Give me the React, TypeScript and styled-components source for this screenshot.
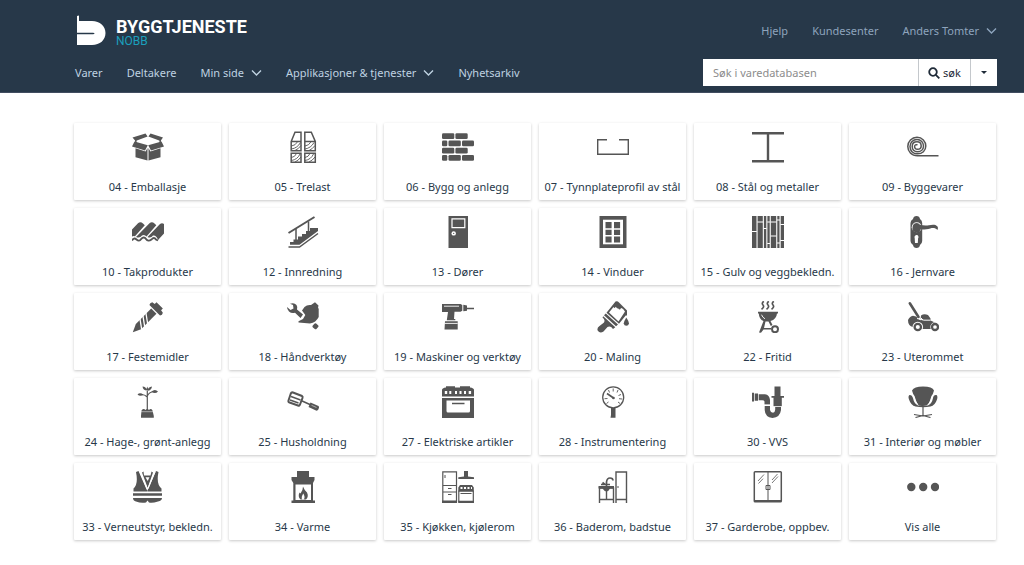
import React from "react";
import styled, { createGlobalStyle } from "styled-components";

const GlobalStyle = createGlobalStyle`
  *, *::before, *::after { box-sizing: border-box; }
  body {
    margin: 0;
    background: #fff;
    color: #273849;
    font: 11px/16px "Noto Sans", "Open Sans", sans-serif;
  }
  a { color: inherit; text-decoration: none; }
  button, input { font: inherit; }
`;

const Header = styled.header`
  display: flex;
  flex-direction: column;
  gap: 12px;
  padding: 14px 27px 6px 75px;
  background: #273849;
  border-bottom: 1px solid #414d60;
`;

const Bar = styled.div`
  display: flex;
  align-items: center;
  justify-content: space-between;
`;

const Logo = styled.a`
  display: flex;
  align-items: center;
  gap: 10px;
  padding-left: 2px;
  color: #fff;
  font-family: Roboto, "Noto Sans", sans-serif;
`;

const LogoText = styled.span`
  display: flex;
  flex-direction: column;
  padding-top: 5px;
`;

const Brand = styled.span`
  font-size: 18px;
  font-weight: 700;
  line-height: 16px;
`;

const Product = styled.span`
  color: #1b9fbc;
  font-size: 12px;
  line-height: 12px;
`;

const Nav = styled.nav`
  display: flex;
  gap: 24px;
`;

const NavLink = styled.a<{ $muted?: boolean }>`
  display: flex;
  align-items: center;
  gap: 7px;
  color: ${(p) => (p.$muted ? "#8ea4bd" : "#bfd2e1")};
  white-space: nowrap;
`;

const Search = styled.form`
  display: flex;
  width: 294px;
  height: 27px;
`;

const SearchInput = styled.input`
  flex: 1;
  min-width: 0;
  padding: 0 10px;
  border: 0;
  background: #fff;
  color: #273849;
  &::placeholder { color: #8c8c8c; opacity: 1; }
`;

const SearchButton = styled.button<{ $width: number }>`
  display: flex;
  align-items: center;
  justify-content: center;
  gap: 3px;
  width: ${(p) => p.$width}px;
  padding: 0;
  border: 0;
  border-left: 1px solid #c4c8cc;
  background: #fff;
  color: #1f2b38;
`;

const Grid = styled.main`
  display: grid;
  grid-template-columns: repeat(6, minmax(0, 1fr));
  gap: 8px;
  padding: 30px 28px 26px 74px;
`;

const Card = styled.a`
  display: flex;
  flex-direction: column;
  align-items: center;
  gap: 16px;
  padding: 8px 0 5px;
  border-radius: 1px;
  background: #fff;
  box-shadow: 0 1px 3px rgba(0, 0, 0, 0.22);
  white-space: nowrap;
`;

const Icon = styled.svg`
  width: 32px;
  height: 32px;
  fill: #555;
  stroke: none;
  .l { fill: none; stroke: #555; }
  .w { fill: #fff; }
  .wl { fill: none; stroke: #fff; }
`;

const Chevron = () => (
  <svg width="11" height="8" viewBox="0 0 11 8" fill="none" stroke="currentColor" strokeWidth="1.4" aria-hidden="true">
    <path d="M1 1.5 5.5 6 10 1.5" />
  </svg>
);

const icons = {
  box: (
    <>
      <path d="M.5 6.500 13.500 2.500 15.600 5.500 3.500 10ZM31 6.500 18.500 2.500 16.400 5.500 28.500 10ZM2.500 10.500 15.800 14.300 13 19.500 0 15.600ZM29.500 10.500 16.200 14.300 19 19.500 32 15.600Z" />
      <path d="M3.500 17.300 13.600 20.400 15.500 17V29.600L3.500 26.300ZM28.500 17.300 18.400 20.400 16.500 17V29.600L28.500 26.300Z" />
      <path className="l" strokeWidth="1.500" d="M3.800 9V12M28.200 9V12" />
    </>
  ),
  timber: (
    <g className="l" strokeWidth="1.500">
      <path d="M4.200 10.500 8 1.200h6v18.600H4.200ZM4.200 10.500H14M4.200 22.200H14v9H4.200Z" />
      <path d="M17.800 1.200h6.500l4 9.300v9.300H17.800ZM17.800 10.500h10.500M17.800 22.200h10.500v9H17.800Z" />
      <path strokeWidth=".9" d="M4.500 15q4-.5 6-4.200M4.500 18q6-1 9-6.500M8 19.500q3.500-1.500 6-5M4.500 26.500q3.500-.5 5-4M4.500 29.500q6-1 8.500-6.500M8 31q3.500-1.500 6-5" />
      <path strokeWidth=".9" d="M18 15q4-.5 6-4.200M18 18q6-1 9-6.500M22 19.500q3.500-1.500 6-5M18 26.500q3.500-.5 5-4M18 29.500q6-1 8.500-6.500M22 31q3.500-1.500 6-5" />
    </g>
  ),
  bricks: (
    <>
      {[2.3, 16.7].map((y) => (
        <g key={y}>
          <rect x="0" y={y} width="12.300" height="5.800" rx="1.300" />
          <rect x="13.400" y={y} width="12.300" height="5.800" rx="1.300" />
          <rect x="0" y={y + 7.2} width="5.300" height="5.800" rx="1.300" />
          <rect x="6.500" y={y + 7.2} width="12.300" height="5.800" rx="1.300" />
          <rect x="20" y={y + 7.2} width="12" height="5.800" rx="1.300" />
        </g>
      ))}
    </>
  ),
  profile: <path className="l" strokeWidth="1.400" d="M10 8.700H.7V23.300H31.300V8.700H22" />,
  beam: <path d="M0 1h32v2.600H17.200V29H32v2.600H0V29H14.800V3.600H0Z" />,
  roll: (
    <path
      className="l"
      strokeWidth="1.500"
      d="M31.500 24.800H10.500C4.500 24.800.8 20.500.8 15.500S4.800 6.300 10 6.300s8.800 4 8.800 8.800-3.600 7.700-8.300 7.700-7.500-3.300-7.500-7.300 3-7 7-7 6.500 3 6.500 6.500-2.700 5.700-6 5.700-5.300-2.200-5.300-5.200 2-4.700 4.800-4.700 4.200 2 4.200 4.200-1.700 3.300-3.700 3.300-2.900-1.300-2.900-2.800 1.400-2.100 2.900-1.700"
    />
  ),
  roof: (
    <>
      <path d="M0 13.500 6 7.200Q8.500 5.300 11 7.500L12.800 9.200 3 20.300Q1.500 19.500 0 20.500ZM4 21 17.500 7.200Q20 5.300 22.500 7.500L24.300 9.200 14.500 20.500Q12.500 18 10 19.500 8 22.500 4 21ZM15.500 21 28 8Q30 6.500 32 8V17.500L26 24Q24.500 19 21 19.500 19 22.500 15.500 21Z" />
      <path className="l" strokeWidth="1.900" d="M0 24.500Q1.800 21.200 4.500 23.500T9 23.200Q12 20 14 23T19.500 23.500Q22 20.500 24 23.500L26 24.500" />
    </>
  ),
  stairs: (
    <>
      <path className="l" strokeWidth="2" d="M1.500 17 27.500 1" />
      <path className="l" strokeWidth="1.500" d="M9 13V25M21.500 5.500V16" />
      <path d="M3 28.800V26H6.500V23.500H11V20.500H15V18H19V15H23V12H31V15L12.500 28.800Z" />
      <path className="l" strokeWidth="1.500" d="M1.500 31H12.500L31 17.500" />
    </>
  ),
  door: (
    <>
      <path d="M6.500 0H26V32H6.500Z" />
      <path className="wl" strokeWidth="1.200" d="M10 2.800H22.800V11.700H10Z" />
      <circle className="w" cx="11.700" cy="17.400" r="2.200" />
      <circle cx="11.700" cy="17.400" r=".6" />
    </>
  ),
  window: (
    <>
      <path d="M2.500 0H29.500V32H2.500Z" />
      <path className="w" d="M6 3.700H26V28.300H6Z" />
      <path d="M8.500 6H14.600V12.200H8.500ZM17 6h6.100v6.200H17ZM8.500 13.800h6.100V19H8.500ZM17 13.800h6.100V19H17ZM8.500 20.600h6.100v6H8.500ZM17 20.600h6.100v6H17Z" />
    </>
  ),
  planks: (
    <>
      <path d="M0 0H4.500V32H0ZM5.600 0H10.800V32H5.600ZM11.900 0H14.300V32H11.900ZM15.400 0H17.700V32H15.400ZM18.800 0H24.200V32H18.800ZM25.300 0H27.500V32H25.300ZM28.700 0H32V32H28.700Z" />
      <path className="wl" d="M0 15.500H4.800M5.300 6H11M11.500 12.500H14.600M15.200 6H18M15.200 27.500H18M18.500 6H24.500M18.500 20H24.500M25 4H28M25 27H28M28.400 8.500H32M28.400 24.500H32" />
    </>
  ),
  handle: (
    <>
      <path d="M6 3Q6.500 0 9.500 0T13 3Q15.200 4.500 15.200 7V25Q15.200 27.500 13 29 12.500 32 9.500 32T6 29Q3.500 27.500 3.500 25V7Q3.500 4.500 6 3Z" />
      <circle className="w" cx="9.700" cy="11.200" r="5" />
      <path d="M5.600 11.200a4.100 4.100 0 0 1 7.400-2.400c3 .7 6 .9 9 .4 3-.6 6.500-1 8.500 1.200.6 1 .6 2.500-.2 3.700-1.500-2-4-2.400-7-1.700-3 .7-6 1.200-9.800 1A4.100 4.100 0 0 1 5.600 11.200Z" />
      <path className="w" d="M7.500 21a2 2 0 1 1 3.600 1.200L10.800 27H8L7.700 22.200Z" />
    </>
  ),
  screw: (
    <g transform="rotate(45 16 16)">
      <path d="M11.500-.5H20.500V2L23.500 2.500Q25 4.500 23.500 6.500H8.500Q7 4.500 8.500 2.500L11.500 2Z" />
      <path d="M12.300 7.800H19.700V29.500L16 37.500 12.300 29.500Z" />
      <path className="wl" strokeWidth="1.300" d="M11.500 14.500 20.500 21M11.500 18.700 20.500 25.200M11.500 22.900 20.500 29.400" />
    </g>
  ),
  handtools: (
    <>
      <path d="M0 6 3.500 9 6.500 7.500 6 4 3 2.800Q7 1 9.500 4 11 6.500 10 8.500L16 13.500 13.500 17 8 11.700Q4.500 12.700 2 10.500 0 8.500 0 6Z" />
      <path d="M17.500 6Q20 3.500 24 4L28 1.300 31.500 4.500Q30.500 6.500 31.700 8V16Q29 21.500 23 22.500L11.500 21.500V20.200L16 18 18.300 14 15 9.500Z" />
      <rect x="26" y="22.800" width="5" height="5" rx="1.300" transform="rotate(40 28.500 25.300)" />
    </>
  ),
  drill: (
    <>
      <path d="M0 3H18.500L20.300 4V9.700L18.500 10.700H12.500L12 18H13.300V19.300H4.800L6 11H0ZM21.300 3.800 25 4.500V6.800H32V8.300H25V9.700L21.300 10.300ZM3 20.200H15.700V28.500H2.500Z" />
      <path className="wl" strokeWidth=".9" d="M2 5.200H17M2.500 22.400H15.700" />
    </>
  ),
  brush: (
    <>
      <path d="M7 14.200 8.800 12.500 21 23.500 19 25.300ZM6.200 15.200 18.300 26.200 16 28Q13.500 24.500 10.500 26L6.500 30.500Q3 33 .8 29.800-.5 27 2.500 25L7 21.500Q8.500 18.500 5.500 16.500Z" />
      <path d="M9.500 11.700 18.500.5Q20.500-.3 22 1.500L30 9.500V14.500H28.700L22 22.800Z" />
      <path className="w" d="M12 11.500 16.500 6Q17.700 8 18.800 5.800 20 8 21.300 7.500 22.800 9.800 24 7 26 6.800 28 10.500L21.500 20.500Z" />
      <path d="M29.300 16.500Q32 20.500 32 22.500 31.500 24.800 29.300 24.800T26.700 22.500Q26.800 20.500 29.300 16.500Z" />
    </>
  ),
  grill: (
    <>
      <path className="l" strokeWidth="1.700" d="M11.800.3Q9.300 2.200 11 4T9.500 8.300M16.800.3Q14.300 2.200 16 4T14.500 8.300M21.800.3Q19.300 2.200 21 4T19.500 8.300" />
      <path d="M6 10.800H26V12.400H25Q24.500 18 18.500 20L20.500 24 18.800 25 16.500 20.500H13.500L12 27H19V28.600H11.500L9 31.700 7 31.500 11.500 20Q7 18 6.800 12.400H6Z" />
      <path className="wl" strokeWidth=".9" d="M9.500 13.700Q10.500 16.500 13 17.800" />
      <circle className="l" strokeWidth="2" cx="23" cy="28.200" r="3" />
    </>
  ),
  mower: (
    <>
      <path className="l" strokeWidth="2.600" strokeLinecap="round" d="M2.800 2.300 11.500 16" />
      <path d="M1 19Q2.500 15.500 6 14.800L9 15.500 13.500 19.500 14 14.500Q17 12.300 21 14L23.500 17.500V19.500L29 22 30 24 24 28H15L5.500 26Q1 24.500 1 19Z" />
      <path className="wl" d="M10 17.500Q17 20 23.500 19.200M14 17 16 19" />
      <circle className="w" cx="10.800" cy="26" r="5.300" />
      <circle className="w" cx="28" cy="26" r="4.700" />
      <circle className="l" strokeWidth="2.300" cx="10.800" cy="26" r="3.200" />
      <circle className="l" strokeWidth="2.300" cx="28" cy="26" r="3" />
    </>
  ),
  plant: (
    <>
      <path className="l" strokeWidth="1.200" d="M15.300 5V24M9 8.500Q13 8.500 15.300 11M22 5.500Q17 6 15.300 10" />
      <path d="M10.500.5Q14 .5 15 4.500 11 4.500 10.500.5ZM20 .5Q19.500 4.500 15.600 4.800 16 1 20 .5ZM15.300.5Q17 3 15.300 5 13.700 3 15.300.5ZM5.500 8.500Q8 6 11.500 8.800 8 11 5.500 8.500ZM26 5.500Q23 2.500 19.500 5.500 23 8.500 26 5.500ZM9.500 24.500Q11.500 22 13.500 24 15.300 22 17 24 19 22 20.500 24.500L21.800 30V31.800H9V30Z" />
      <path className="wl" strokeWidth=".5" d="M9 25.700H21.500" />
    </>
  ),
  spatula: (
    <>
      <path className="l" strokeWidth="2" d="M3.800 7.500Q4.500 6 6 6.500L15 10Q16 10.700 15.500 12L13 18.500Q12.500 20 11 19.500L2.500 16.500Q1 16 1.500 14.500Z" />
      <path className="l" strokeWidth="1.400" d="M4 10.500 13.500 14M3 14 11.500 17M14 14.500 24 19" />
      <path d="M23.500 16.500 31.500 20Q32.500 21 31.300 23.500 30.500 25 29 24.500L21.500 21Z" />
      <path className="wl" strokeWidth=".5" d="M24.500 19.300 29.500 21.500" />
    </>
  ),
  stove: (
    <>
      <path d="M4 .3H13V1.500H18V.3H28V1.500Q32 2 32 4V10.500H0V4Q0 2 4 1.500ZM0 12H32V32H0Z" />
      <path className="w" d="M2.800 5H5.200V8H2.800ZM7.300 5h2v3h-2ZM13 5h2v3h-2ZM17.500 5h2v3h-2ZM22 5h2v3h-2ZM26.700 5h2.400v3h-2.400ZM4.500 14.500H28V25Q28 26.500 26.500 26.500H6Q4.500 26.500 4.500 25Z" />
      <path className="l" strokeWidth="1.500" d="M10 17.500H22.500" />
    </>
  ),
  gauge: (
    <>
      <circle className="l" strokeWidth="1.300" cx="16.200" cy="11.300" r="10.500" />
      <path className="l" strokeWidth=".9" d="M16.200 2.500V5.500M11.500 4 12.500 6.500M21 4 20 6.500M24 8.500 21.500 9.500M25 13 22 12.700M7.500 12.700 10.500 12.500M9.500 17.500 11.500 16M23 17.500 21 16" />
      <path className="l" strokeWidth="1.700" d="M10 7.500 16.500 12" />
      <path d="M14 22H18.500V31.700H13.500L14 29Z" />
      <circle cx="16.500" cy="12" r="1.300" />
    </>
  ),
  pipe: (
    <>
      <path d="M0 6.800H2V15.500H0ZM2.700 7.500H6V14.800H2.700ZM6.700 8.300H13Q17.500 9 18 14V18.500H12.500V15.500Q12 14.300 10.500 14.300H6.700ZM22.500.5H28.500V10H32V11.700H29.800V20.700H29V24Q28 31.500 20.500 32 13 31 12.700 24V20H18V24Q18.500 26.700 21 26.700 23.200 26 23.200 23.500V20.700H21.500V11.700H19.500V10H22.500Z" />
      <path className="wl" strokeWidth=".8" d="M12 19.200H19M21 20.500H30" />
    </>
  ),
  chair: (
    <>
      <path d="M5 4.500Q7 .7 16 .5 25.500.7 27 4.500 26 8.500 24.500 10L22 17.500Q20 19.500 16 20T10 17.500L7.500 10Q6 8.500 5 4.500Z" />
      <path d="M2.500 9Q.8 10 2 13.500 4 19.500 8.500 20.500 16 22 23.500 20.500 28 19.500 30 13.500 31 10 29.500 9 26.500 8.500 26 12 25 17.500 21 19.500H11Q7 17.500 6 12 5 8.500 2.500 9Z" />
      <path className="wl" strokeWidth=".9" d="M6.500 10Q7.500 15 10.500 18M25.500 10Q24.500 15 21.500 18" />
      <path className="l" strokeWidth="1.200" d="M16 21V30M7 28.500 16 30 25 28.500M8.500 31.500 16 29.500 23.500 31.500" />
    </>
  ),
  vest: (
    <>
      <path d="M4 1 6.500 0 15.500 20.500H1.500V17.500Q6.500 13 4 1ZM26.500 1 24 0 15 20.500H29.500V17.500Q24 13 26.500 1ZM10 1.500 11.500.5 12 4.500H18.500L19.500.5 21 1.500 15.700 17ZM1 22.200H30V24.800H1ZM1 27H30Q30 29.500 26 30.500 20 32.500 17 31.500L15.500 29.500 14 31.500Q9 32.500 4 30.500 1 29.500 1 27Z" />
      <path className="wl" strokeWidth="1.200" d="M8 .5 15 17.500M23 .5 16 17.500" />
      <path className="w" d="M13.500 6.200H17.500L15.700 10Z" />
    </>
  ),
  fireplace: (
    <>
      <path d="M10 0H22V6H27.500V9L26 12V29.500H28V32H4.500V29.500H6.300V12L4.500 9V6H10Z" />
      <path className="w" d="M8.500 13.500H24V29H8.500Z" />
      <path d="M16 15.500Q17 18.500 20 21.500 22 25.500 19 28.500H13.500Q10.500 25.500 12.500 21.500L13.500 22.500Q16 19.500 16 15.500Z" />
      <path className="w" d="M16.300 22.500Q18.500 26 16.800 28.500H15Q14 26 16.300 22.500Z" />
    </>
  ),
  kitchen: (
    <>
      <path className="l" strokeWidth="1.200" d="M.8.800H14.500V31H.8ZM.8 14.500H14.500M.8 21H14.500M16.800 20H31.300V31H16.800Z" />
      <path className="l" strokeWidth="1" d="M3 4V7M6 17.500H9.500M6 23.500H9.500M18.500 22.500H29.500" />
      <path d="M22 0H26V5.500L32 6.300V8H16.300V6.300L22 5.500ZM16.300 16.500 18 14H30L31.800 16.500V20.500H16.300ZM0 29.500H15V32H0ZM16.300 29.800H32V32H16.300Z" />
      <path className="w" d="M18.500 16H20.500V18H18.500ZM22 16h2v2H22ZM25.500 16h2v2h-2ZM29 16h1v2H29Z" />
    </>
  ),
  bathroom: (
    <>
      <path className="l" strokeWidth="1.400" d="M2.500 32V17H16.500V32M9.500 17V28M2.500 28.500H16.500M19 32V1H29.500V32M19 28.500H29.500" />
      <path className="l" strokeWidth="1.700" d="M9.500 16V11Q10 7 13 7T16 9.500M4 13.500H13M5.500 11.500 8 13.500" />
      <path d="M1.500 15H17V17.500H13Q11.500 20.500 9.500 20.500T5.500 17.500H1.500ZM20.500 15H21.500V17H20.500Z" />
    </>
  ),
  wardrobe: (
    <>
      <rect className="l" strokeWidth="1.500" x="2.300" y=".8" width="27" height="30" rx=".8" />
      <path className="l" d="M16 1V30M2 29.500H29.500M14 14.500H18V18.500H14Z" />
      <path className="l" strokeWidth=".8" d="M6 10 12 3.500M6.500 12.500 11 7.700M20 9 25.500 3M20 12 26 5.500" />
    </>
  ),
  dots: (
    <>
      <circle cx="4.300" cy="16" r="4.200" />
      <circle cx="16.200" cy="16" r="4.200" />
      <circle cx="28" cy="16" r="4.200" />
    </>
  ),
};

const categories: { icon: keyof typeof icons; label: string }[] = [
  { icon: "box", label: "04 - Emballasje" },
  { icon: "timber", label: "05 - Trelast" },
  { icon: "bricks", label: "06 - Bygg og anlegg" },
  { icon: "profile", label: "07 - Tynnplateprofil av stål" },
  { icon: "beam", label: "08 - Stål og metaller" },
  { icon: "roll", label: "09 - Byggevarer" },
  { icon: "roof", label: "10 - Takprodukter" },
  { icon: "stairs", label: "12 - Innredning" },
  { icon: "door", label: "13 - Dører" },
  { icon: "window", label: "14 - Vinduer" },
  { icon: "planks", label: "15 - Gulv og veggbekledn." },
  { icon: "handle", label: "16 - Jernvare" },
  { icon: "screw", label: "17 - Festemidler" },
  { icon: "handtools", label: "18 - Håndverktøy" },
  { icon: "drill", label: "19 - Maskiner og verktøy" },
  { icon: "brush", label: "20 - Maling" },
  { icon: "grill", label: "22 - Fritid" },
  { icon: "mower", label: "23 - Uterommet" },
  { icon: "plant", label: "24 - Hage-, grønt-anlegg" },
  { icon: "spatula", label: "25 - Husholdning" },
  { icon: "stove", label: "27 - Elektriske artikler" },
  { icon: "gauge", label: "28 - Instrumentering" },
  { icon: "pipe", label: "30 - VVS" },
  { icon: "chair", label: "31 - Interiør og møbler" },
  { icon: "vest", label: "33 - Verneutstyr, bekledn." },
  { icon: "fireplace", label: "34 - Varme" },
  { icon: "kitchen", label: "35 - Kjøkken, kjølerom" },
  { icon: "bathroom", label: "36 - Baderom, badstue" },
  { icon: "wardrobe", label: "37 - Garderobe, oppbev." },
  { icon: "dots", label: "Vis alle" },
];

export default function App() {
  return (
    <>
      <GlobalStyle />
      <Header>
        <Bar>
          <Logo href="#">
            <svg width="29" height="31" viewBox="0 0 29 31" fill="currentColor" aria-hidden="true">
              <path d="M0 1 2 .5V6H15C23 6 28.500 11 28.500 18S23 30 15 30H0V19.300H16Q17.500 19.300 17.500 18.500T16 17.700H0Z" />
            </svg>
            <LogoText>
              <Brand>BYGGTJENESTE</Brand>
              <Product>NOBB</Product>
            </LogoText>
          </Logo>
          <Nav>
            <NavLink $muted href="#">Hjelp</NavLink>
            <NavLink $muted href="#">Kundesenter</NavLink>
            <NavLink $muted href="#">Anders Tomter <Chevron /></NavLink>
          </Nav>
        </Bar>
        <Bar>
          <Nav>
            <NavLink href="#">Varer</NavLink>
            <NavLink href="#">Deltakere</NavLink>
            <NavLink href="#">Min side <Chevron /></NavLink>
            <NavLink href="#">Applikasjoner &amp; tjenester <Chevron /></NavLink>
            <NavLink href="#">Nyhetsarkiv</NavLink>
          </Nav>
          <Search onSubmit={(e) => e.preventDefault()}>
            <SearchInput type="search" placeholder="Søk i varedatabasen" aria-label="Søk i varedatabasen" />
            <SearchButton $width={52} type="submit">
              <svg width="12" height="12" viewBox="0 0 12 12" fill="none" stroke="currentColor" strokeWidth="1.800" aria-hidden="true">
                <circle cx="5" cy="5" r="3.800" />
                <path d="m7.800 7.800 3.500 3.500" />
              </svg>
              søk
            </SearchButton>
            <SearchButton $width={27} type="button" aria-label="Flere søkevalg">
              <svg width="6" height="3" viewBox="0 0 6 3" fill="currentColor" aria-hidden="true">
                <path d="M0 0h6L3 3Z" />
              </svg>
            </SearchButton>
          </Search>
        </Bar>
      </Header>
      <Grid>
        {categories.map(({ icon, label }) => (
          <Card href="#" key={label}>
            <Icon viewBox="0 0 32 32" aria-hidden="true">{icons[icon]}</Icon>
            {label}
          </Card>
        ))}
      </Grid>
    </>
  );
}
